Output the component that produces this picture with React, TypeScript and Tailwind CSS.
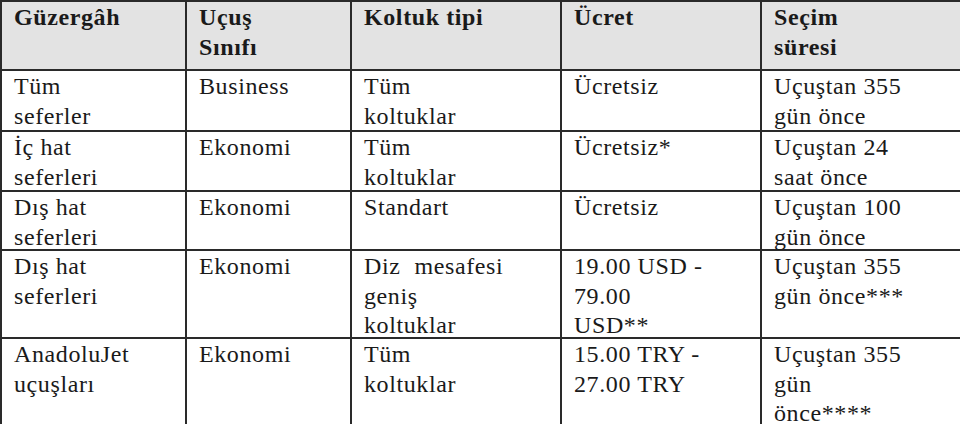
import React from "react";

type Row = string[][];

const header: Row = [
  ["Güzergâh"],
  ["Uçuş", "Sınıfı"],
  ["Koltuk tipi"],
  ["Ücret"],
  ["Seçim", "süresi"],
];

const rows: Row[] = [
  [["Tüm", "seferler"], ["Business"], ["Tüm", "koltuklar"], ["Ücretsiz"], ["Uçuştan 355", "gün önce"]],
  [["İç hat", "seferleri"], ["Ekonomi"], ["Tüm", "koltuklar"], ["Ücretsiz*"], ["Uçuştan 24", "saat önce"]],
  [["Dış hat", "seferleri"], ["Ekonomi"], ["Standart"], ["Ücretsiz"], ["Uçuştan 100", "gün önce"]],
  [["Dış hat", "seferleri"], ["Ekonomi"], ["Diz mesafesi", "geniş", "koltuklar"], ["19.00 USD -", "79.00", "USD**"], ["Uçuştan 355", "gün önce***"]],
  [["AnadoluJet", "uçuşları"], ["Ekonomi"], ["Tüm", "koltuklar"], ["15.00 TRY -", "27.00 TRY"], ["Uçuştan 355", "gün", "önce****"]],
];

function Line({ text }: { text: string }) {
  // the justified "Diz mesafesi" line has a wide gap in the original
  if (text === "Diz mesafesi") {
    return (
      <div>
        Diz<span className="ml-[14px]">mesafesi</span>
      </div>
    );
  }
  return <div>{text}</div>;
}

function Cell({ lines, head }: { lines: string[]; head?: boolean }) {
  return (
    <div
      className={
        head
          ? "bg-[#e3e3e3] pl-[12px] pt-[1px] font-bold whitespace-nowrap"
          : "bg-white pl-[12px] pt-[1px] whitespace-nowrap"
      }
    >
      {lines.map((l, i) => (
        <Line key={i} text={l} />
      ))}
    </div>
  );
}

export default function App() {
  return (
    <div className="w-[960px] h-[424px] overflow-hidden bg-white font-['Liberation_Serif','Times_New_Roman',serif] text-[24px] leading-[29.5px] tracking-[0.6px] text-[#1a1a1a]">
      <div className="grid w-max grid-cols-[183px_163px_208px_198px_240px] grid-rows-[67px_59px_58px_57px_86px_90px] gap-[2px] bg-[#2a2a2a] p-[2px]">
        {header.map((c, i) => (
          <Cell key={"h" + i} lines={c} head />
        ))}
        {rows.map((r, ri) =>
          r.map((c, ci) => <Cell key={ri + "-" + ci} lines={c} />)
        )}
      </div>
    </div>
  );
}
